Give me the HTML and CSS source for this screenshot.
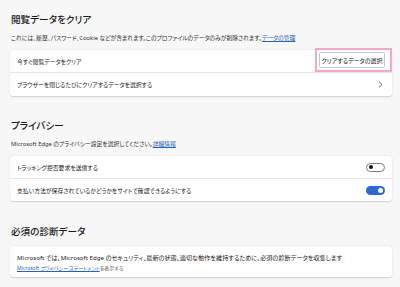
FILE: index.html
```html
<!DOCTYPE html>
<html lang="ja">
<head>
<meta charset="utf-8">
<link rel="stylesheet" href="styles.css">
</head>
<body>
<div class="page">
  <section class="section s1">
    <h2 class="heading">閲覧データをクリア</h2>
    <p class="desc">これには、履歴、パスワード、Cookie などが含まれます。このプロファイルのデータのみが削除されます。<a class="link">データの管理</a></p>
    <div class="card">
      <div class="row">
        <span class="label">今すぐ閲覧データをクリア</span>
        <span class="btn-wrap"><button class="btn">クリアするデータの選択</button></span>
      </div>
      <div class="row row-b">
        <span class="label">ブラウザーを閉じるたびにクリアするデータを選択する</span>
        <svg class="chev" width="5" height="7" viewBox="0 0 5 7"><path d="M1 0.6 L4 3.5 L1 6.4" fill="none" stroke="#444" stroke-width="0.8"/></svg>
      </div>
    </div>
  </section>
  <section class="section s2">
    <h2 class="heading">プライバシー</h2>
    <p class="desc">Microsoft Edge のプライバシー設定を選択してください。<a class="link">詳細情報</a></p>
    <div class="card">
      <div class="row">
        <span class="label">トラッキング拒否要求を送信する</span>
        <span class="toggle off"><span class="knob"></span></span>
      </div>
      <div class="row row-c">
        <span class="label">支払い方法が保存されているかどうかをサイトで確認できるようにする</span>
        <span class="toggle on"><span class="knob"></span></span>
      </div>
    </div>
  </section>
  <section class="section s3">
    <h2 class="heading">必須の診断データ</h2>
    <div class="card text-card">
      <p class="line">Microsoft では、Microsoft Edge のセキュリティ、最新の状態、適切な動作を維持するために、必須の診断データを収集します</p>
      <p class="line sub"><a class="link">Microsoft プライバシー ステートメント</a>を表示する</p>
    </div>
  </section>
</div>
</body>
</html>
```
FILE: styles.css
```css
html, body {
  margin: 0;
  padding: 0;
  background: #f7f7f7;
}
body {
  width: 400px;
  height: 287px;
  overflow: hidden;
  font-family: "Noto Sans", "Noto Sans CJK JP", sans-serif;
  font-feature-settings: "palt";
  color: #1b1b1b;
}
.page {
  padding: 13px 8px 0 10px;
}
.section {
  display: flex;
  flex-direction: column;
}
.s2 { margin-top: 23px; }
.s3 { margin-top: 24px; }
.heading {
  margin: 0 0 6px 1px;
  font-size: 9.6px;
  line-height: 14px;
  font-weight: 500;
  color: #1a1a1a;
}
.s3 .heading { margin-bottom: 7px; }
.desc {
  margin: 0 0 7px 1px;
  font-size: 5.8px;
  line-height: 10px;
  color: #333;
}
.link {
  color: #2a62b8;
  text-decoration: underline;
  text-underline-offset: 1px;
}
.card {
  background: #fff;
  border-radius: 3px;
  box-shadow: 0 0.5px 1.5px rgba(0,0,0,0.16);
}
.row {
  height: 22px;
  display: flex;
  align-items: center;
  justify-content: space-between;
  padding: 0 7px 0 7px;
  font-size: 5.85px;
  color: #222;
}
.row + .row {
  border-top: 1px solid #e8e8e8;
}
.row-b { height: 23px; padding-right: 9px; }
.label { white-space: nowrap; }
.btn-wrap {
  position: relative;
  display: flex;
  margin-top: -2px;
}
.btn-wrap::after {
  content: "";
  position: absolute;
  left: -4px;
  right: -7px;
  top: -4px;
  bottom: -4px;
  border: 2px solid #f2a9c9;
}
.btn {
  width: 66px;
  height: 16px;
  padding: 0;
  background: #fff;
  border: 1px solid #c8c8c8;
  border-radius: 2px;
  font-family: inherit;
  font-feature-settings: "palt";
  font-size: 6px;
  color: #222;
}
.chev { display: block; }
.toggle {
  position: relative;
  width: 19px;
  height: 9px;
  box-sizing: border-box;
  border-radius: 5px;
  display: flex;
  align-items: center;
}
.toggle.off {
  border: 1px solid #7a7a7a;
  background: #fff;
  padding-left: 2px;
}
.toggle.off .knob {
  width: 4px;
  height: 4px;
  border-radius: 50%;
  background: #111;
}
.toggle.on {
  background: #2f67d1;
  justify-content: flex-end;
  padding-right: 2px;
}
.toggle.on .knob {
  width: 5px;
  height: 5px;
  border-radius: 50%;
  background: #fff;
}
.text-card {
  padding: 6px 7px 3px 7px;
}
.line {
  margin: 0;
  font-size: 6.15px;
  line-height: 11px;
  color: #222;
  white-space: nowrap;
}
.line.sub {
  font-size: 5px;
  color: #555;
}
```
